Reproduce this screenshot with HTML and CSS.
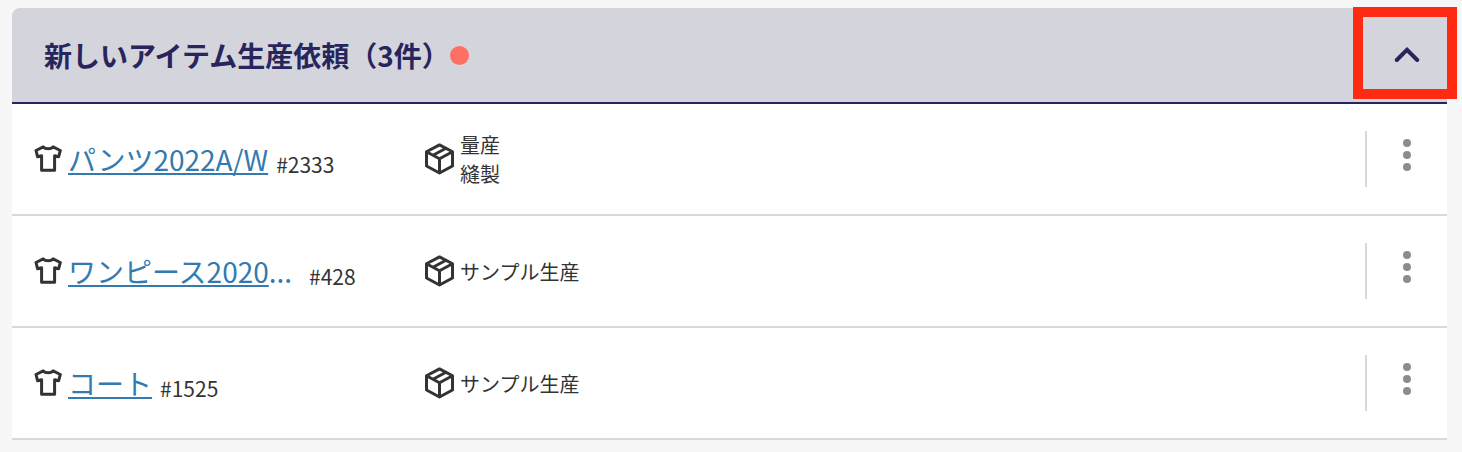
FILE: index.html
```html
<!DOCTYPE html>
<html lang="ja">
<head>
<meta charset="utf-8">
<meta name="viewport" content="width=device-width, initial-scale=1.0">
<title>新しいアイテム生産依頼</title>
<link rel="stylesheet" href="styles.css">
</head>
<body>
<svg class="symbols">
  <symbol id="shirt" viewBox="0 0 28 28">
    <path d="M9.2 1.900 2 5.500l1.600 6.300 4-1V25.300h13V10.800l4 1L26.300 5.500 19.100 1.900C17 4.500 11.300 4.500 9.200 1.900Z"/>
  </symbol>
  <symbol id="box" viewBox="0 0 30 32">
    <path d="M15.500 1.900 28.500 8.800v14.200L15.500 30 2.500 23V8.800ZM2.500 8.800l13 6.900 13-6.900M15.500 15.700V30M9 12.200 22 5.300"/>
  </symbol>
</svg>
<div class="panel">
  <div class="panel-header">
    <h2 class="panel-title">新しいアイテム生産依頼（3件）</h2>
    <span class="panel-dot"></span>
    <a class="panel-toggle" href="javascript:">
      <svg width="26" height="16" viewBox="0 0 26 16"><path d="M2.800 13 13 2.800 23.200 13"/></svg>
    </a>
    <div class="marker"></div>
  </div>
  <div class="row">
    <div class="item">
      <svg class="icon-shirt"><use href="#shirt"/></svg>
      <a class="item-name" href="javascript:">パンツ2022A/W</a>
      <span class="item-id">#2333</span>
    </div>
    <div class="kind">
      <svg class="icon-box"><use href="#box"/></svg>
      <div class="kind-text">量産<br>縫製</div>
    </div>
    <div class="menu"><i></i><i></i><i></i></div>
  </div>
  <div class="row">
    <div class="item">
      <svg class="icon-shirt"><use href="#shirt"/></svg>
      <div class="item-clip"><a class="item-name" href="javascript:">ワンピース2020</a><span class="item-more">...</span></div>
      <span class="item-id">#428</span>
    </div>
    <div class="kind">
      <svg class="icon-box"><use href="#box"/></svg>
      <div class="kind-text">サンプル生産</div>
    </div>
    <div class="menu"><i></i><i></i><i></i></div>
  </div>
  <div class="row">
    <div class="item">
      <svg class="icon-shirt"><use href="#shirt"/></svg>
      <a class="item-name" href="javascript:">コート</a>
      <span class="item-id">#1525</span>
    </div>
    <div class="kind">
      <svg class="icon-box"><use href="#box"/></svg>
      <div class="kind-text">サンプル生産</div>
    </div>
    <div class="menu"><i></i><i></i><i></i></div>
  </div>
</div>
</body>
</html>
```

FILE: styles.css
```css
* {
  box-sizing: border-box;
}
body {
  margin: 0;
  padding: 8px 15px 0 12px;
  background: #f7f7f7;
  color: #333;
  font-family: "Noto Sans CJK JP", sans-serif;
}
svg {
  flex: none;
  fill: none;
  stroke: #333;
  stroke-width: 3;
  stroke-linejoin: round;
}
.symbols {
  display: none;
}

.panel {
  background: #fff;
  border-radius: 8px 0 0 0;
}
.panel-header {
  position: relative;
  display: flex;
  align-items: center;
  height: 96px;
  padding-left: 32px;
  background: #d4d4dd;
  border-bottom: 2px solid #27255c;
  border-radius: 8px 0 0 0;
}
.panel-title {
  width: 406px;
  margin: 0;
  color: #27255c;
  font-size: 28px;
  line-height: 40px;
  white-space: nowrap;
}
.panel-dot {
  width: 19px;
  height: 19px;
  border-radius: 50%;
  background: #ff7062;
}
.panel-toggle {
  display: flex;
  margin-left: auto;
  margin-right: 27px;
}
.panel-toggle svg {
  stroke: #27255c;
  stroke-width: 4;
  stroke-linecap: round;
  stroke-linejoin: miter;
}
.marker {
  position: absolute;
  top: -1px;
  right: -10px;
  width: 104px;
  height: 92px;
  border: 10px solid #ff2a12;
  pointer-events: none;
}

.row {
  display: flex;
  align-items: center;
  height: 112px;
  padding-left: 22px;
  border-bottom: 2px solid #d9d9d9;
}
.item {
  display: flex;
  align-items: center;
  width: 390px;
}
.icon-shirt {
  width: 28px;
  height: 28px;
  margin-right: 6px;
}
.item-name {
  color: #337ab0;
  font-size: 28px;
  line-height: 40px;
  text-decoration: underline;
  text-decoration-thickness: 2px;
  text-underline-offset: 2px;
  text-decoration-skip-ink: none;
}
.item-clip {
  width: 233px;
  font-size: 28px;
  line-height: 40px;
}
.item-more {
  color: #337ab0;
}
.item-id {
  margin: 9px 0 0 8px;
  font-size: 21px;
  line-height: 30px;
}
.kind {
  display: flex;
  align-items: center;
}
.icon-box {
  width: 30px;
  height: 32px;
  margin-right: 6px;
}
.kind-text {
  font-size: 20px;
  line-height: 29px;
}
.menu {
  display: flex;
  flex-direction: column;
  align-items: center;
  gap: 4px;
  width: 82px;
  height: 56px;
  margin-left: auto;
  padding-top: 8px;
  border-left: 2px solid #d9d9d9;
}
.menu i {
  width: 8px;
  height: 8px;
  border-radius: 50%;
  background: #8c8c8c;
}
```
